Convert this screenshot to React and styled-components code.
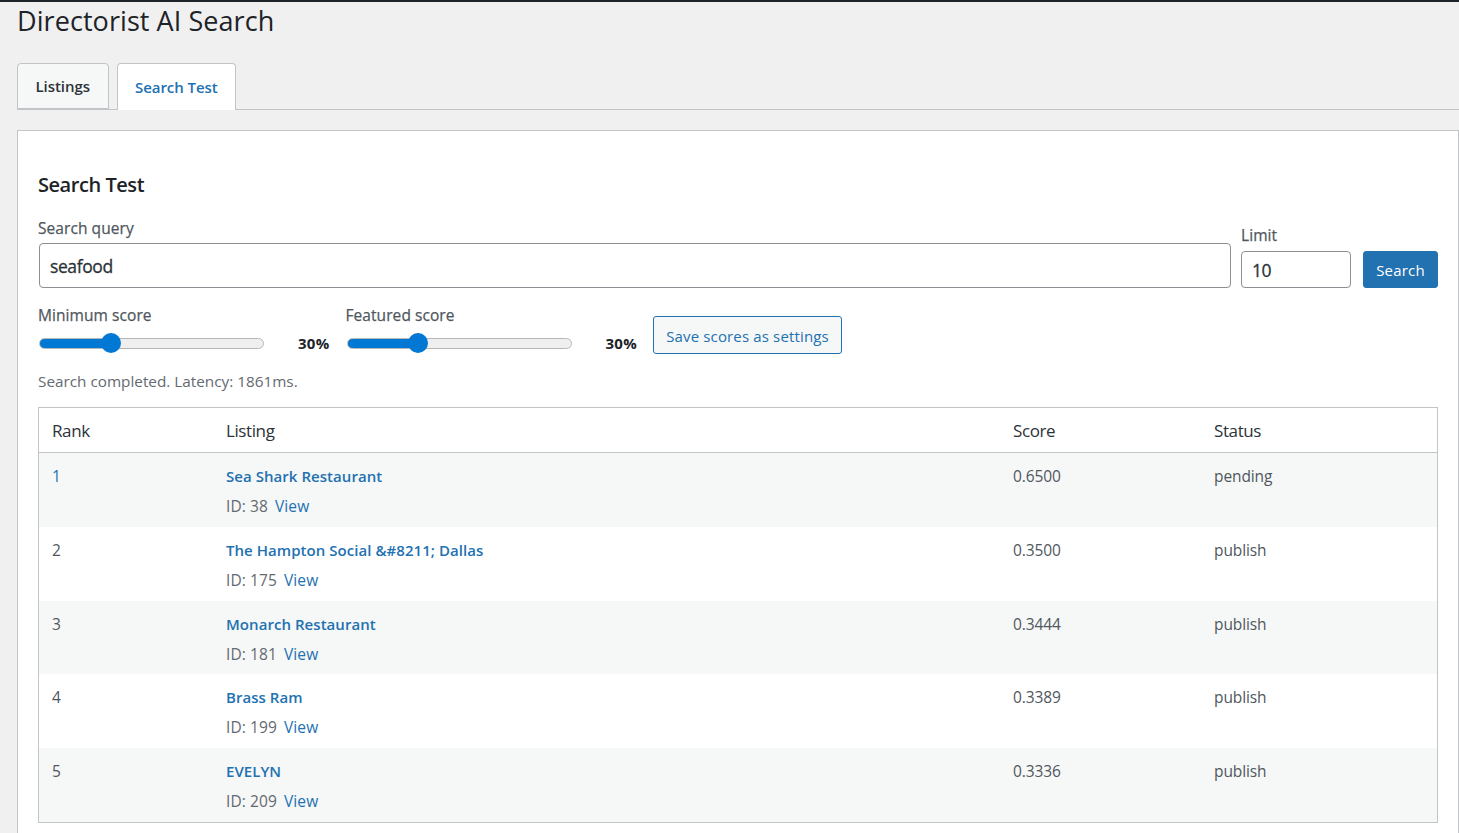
import React, { useState } from "react";
import styled, { createGlobalStyle } from "styled-components";

const GlobalStyle = createGlobalStyle`
  html, body {
    margin: 0;
    padding: 0;
    height: 833px;
    overflow: hidden;
    background: #f0f0f1;
  }
  body {
    font-family: "Open Sans", "Noto Sans", sans-serif;
    font-size: 14px;
    color: #3c434a;
    border-top: 2px solid #1d2327;
    box-sizing: border-box;
  }
`;

const rows = [
  { rank: 1, name: "Sea Shark Restaurant", id: 38, score: "0.6500", status: "pending" },
  { rank: 2, name: "The Hampton Social &#8211; Dallas", id: 175, score: "0.3500", status: "publish" },
  { rank: 3, name: "Monarch Restaurant", id: 181, score: "0.3444", status: "publish" },
  { rank: 4, name: "Brass Ram", id: 199, score: "0.3389", status: "publish" },
  { rank: 5, name: "EVELYN", id: 209, score: "0.3336", status: "publish" },
];

function ScoreSlider({ label, value }) {
  const [current, setCurrent] = useState(value);
  return (
    <SliderGroup>
      <SliderLabel>{label}</SliderLabel>
      <SliderRow>
        <Range
          type="range"
          min="0"
          max="100"
          value={current}
          $fill={10 + (current / 100) * 205}
          onChange={(e) => setCurrent(Number(e.target.value))}
        />
        <Percent>{current}%</Percent>
      </SliderRow>
    </SliderGroup>
  );
}

function App() {
  const [query, setQuery] = useState("seafood");
  const [limit, setLimit] = useState("10");

  return (
    <Page>
      <GlobalStyle />
      <Title>Directorist AI Search</Title>
      <Tabs>
        <Tab>Listings</Tab>
        <Tab $active>Search Test</Tab>
      </Tabs>
      <Panel>
        <PanelTitle>Search Test</PanelTitle>
        <SearchRow>
          <QueryField>
            <FieldLabel>Search query</FieldLabel>
            <QueryInput value={query} onChange={(e) => setQuery(e.target.value)} />
          </QueryField>
          <LimitField>
            <LimitLabel>Limit</LimitLabel>
            <LimitInput value={limit} onChange={(e) => setLimit(e.target.value)} />
          </LimitField>
          <PrimaryButton>Search</PrimaryButton>
        </SearchRow>
        <ScoreRow>
          <ScoreSlider label="Minimum score" value={30} />
          <ScoreSlider label="Featured score" value={30} />
          <SecondaryButton>Save scores as settings</SecondaryButton>
        </ScoreRow>
        <StatusLine>Search completed. Latency: 1861ms.</StatusLine>
        <Results>
          <colgroup>
            <col width="174" />
            <col width="787" />
            <col width="201" />
            <col />
          </colgroup>
          <thead>
            <tr>
              <HeadCell>Rank</HeadCell>
              <HeadCell>Listing</HeadCell>
              <HeadCell>Score</HeadCell>
              <HeadCell>Status</HeadCell>
            </tr>
          </thead>
          <tbody>
            {rows.map((row) => (
              <ResultRow key={row.id}>
                <Cell $link={row.rank === 1}>{row.rank}</Cell>
                <Cell>
                  <ListingName href="#">{row.name}</ListingName>
                  <ListingMeta>
                    ID: {row.id}
                    <ViewLink href="#">View</ViewLink>
                  </ListingMeta>
                </Cell>
                <Cell>{row.score}</Cell>
                <Cell>{row.status}</Cell>
              </ResultRow>
            ))}
          </tbody>
        </Results>
      </Panel>
    </Page>
  );
}

export default App;

const Page = styled.div`
  padding: 0 0 0 17px;
`;

const Title = styled.h1`
  margin: 0;
  height: 61px;
  font-size: 27px;
  font-weight: 400;
  line-height: 38px;
  color: #1d2327;
  letter-spacing: 0.07px;
`;

const Tabs = styled.div`
  display: flex;
  gap: 8px;
  height: 46px;
  border-bottom: 1px solid #c3c4c7;
`;

const Tab = styled.a`
  box-sizing: border-box;
  height: ${(p) => (p.$active ? "47px" : "46px")};
  padding: 0 17.5px;
  display: flex;
  align-items: center;
  font-size: 15px;
  font-weight: 600;
  letter-spacing: -0.05px;
  border: 1px solid #c3c4c7;
  border-radius: 4px 4px 0 0;
  background: ${(p) => (p.$active ? "#fff" : "#f6f7f7")};
  border-bottom: ${(p) => (p.$active ? "none" : "1px solid #c3c4c7")};
  color: ${(p) => (p.$active ? "#2271b1" : "#2c3338")};
`;

const Panel = styled.div`
  box-sizing: border-box;
  margin-top: 20px;
  height: 720px;
  padding: 0 20px;
  background: #fff;
  border: 1px solid #c3c4c7;
`;

const PanelTitle = styled.h2`
  margin: 0;
  padding-top: 40px;
  font-size: 20px;
  line-height: 28px;
  font-weight: 600;
  letter-spacing: -0.45px;
  color: #1d2327;
`;

const SearchRow = styled.div`
  display: flex;
  align-items: flex-end;
  gap: 12px;
  margin-top: 19px;
`;

const QueryField = styled.div`
  flex: 1;
  display: flex;
  flex-direction: column;
  margin-right: -1px;
`;

const LimitField = styled.div`
  width: 110px;
  display: flex;
  flex-direction: column;
`;

const FieldLabel = styled.label`
  display: block;
  font-size: 15.5px;
  line-height: 20px;
  font-weight: 500;
  letter-spacing: 0.07px;
  color: #50575e;
  -webkit-text-stroke: 0.25px #50575e;
  margin-bottom: 5px;
`;

const LimitLabel = styled(FieldLabel)`
  margin-bottom: 6px;
`;

const SliderLabel = styled(FieldLabel)`
  margin-bottom: 8px;
`;

const TextInput = styled.input`
  box-sizing: border-box;
  width: 100%;
  padding: 0 10px;
  border: 1px solid #8c8f94;
  border-radius: 4px;
  background: #fff;
  color: #2c3338;
  font-family: inherit;
  font-size: 17.5px;
  font-weight: 500;
  letter-spacing: -0.4px;
  -webkit-text-stroke: 0.3px #2c3338;
  outline: none;
`;

const QueryInput = styled(TextInput)`
  margin-left: 1px;
  height: 45px;
`;

const LimitInput = styled(TextInput)`
  height: 37px;
`;

const PrimaryButton = styled.button`
  box-sizing: border-box;
  width: 75px;
  height: 37px;
  border: 1px solid #2271b1;
  border-radius: 3px;
  background: #2271b1;
  color: #fff;
  font-family: inherit;
  font-size: 15px;
  letter-spacing: 0.2px;
`;

const ScoreRow = styled.div`
  display: flex;
  align-items: flex-start;
  gap: 16px;
  margin-top: 17px;
`;

const SliderGroup = styled.div`
  width: 291.5px;
`;

const SliderRow = styled.div`
  display: flex;
  align-items: flex-start;
  height: 20px;
`;

const Range = styled.input`
  appearance: none;
  -webkit-appearance: none;
  width: 225px;
  height: 20px;
  margin: 0 0 0 1px;
  background: transparent;
  outline: none;

  &::-webkit-slider-runnable-track {
    box-sizing: border-box;
    height: 11px;
    border-radius: 6px;
    border: 1px solid #b7b7b7;
    background: linear-gradient(
      to right,
      #0078d4 ${(p) => p.$fill}px,
      #efefef ${(p) => p.$fill}px
    );
  }

  &::-webkit-slider-thumb {
    -webkit-appearance: none;
    width: 20px;
    height: 20px;
    margin-top: -5.5px;
    border-radius: 50%;
    border: 0;
    background: #0078d4;
  }
`;

const Percent = styled.span`
  margin-left: auto;
  font-size: 15px;
  line-height: 20px;
  font-weight: 700;
  letter-spacing: 0.3px;
  color: #1d2327;
`;

const SecondaryButton = styled.button`
  box-sizing: border-box;
  width: 189px;
  height: 38px;
  margin-top: 11px;
  padding-top: 2px;
  border: 1px solid #2271b1;
  border-radius: 3px;
  background: #f6f7f7;
  color: #2271b1;
  font-family: inherit;
  font-size: 15px;
  letter-spacing: 0.15px;
`;

const StatusLine = styled.p`
  margin: 17px 0 16px;
  font-size: 15.3px;
  line-height: 20px;
  color: #646970;
`;

const Results = styled.table`
  box-sizing: border-box;
  width: 1400px;
  table-layout: fixed;
  border-collapse: separate;
  border-spacing: 0;
  border: 1px solid #c3c4c7;
`;

const HeadCell = styled.th`
  height: 44px;
  padding: 0 13px;
  text-align: left;
  font-size: 17px;
  font-weight: 400;
  letter-spacing: -0.4px;
  color: #2c3338;
  border-bottom: 1px solid #c3c4c7;
`;

const ResultRow = styled.tr`
  height: 73.8px;
  &:nth-child(odd) {
    background: #f6f7f7;
  }
`;

const Cell = styled.td`
  padding: 13px 13px 0;
  vertical-align: top;
  font-size: 15.5px;
  line-height: 20px;
  letter-spacing: -0.1px;
  color: ${(p) => (p.$link ? "#2271b1" : "#50575e")};
`;

const ListingName = styled.a`
  display: block;
  font-size: 15px;
  font-weight: 600;
  color: #2271b1;
  text-decoration: none;
  letter-spacing: 0.05px;
`;

const ListingMeta = styled.div`
  margin-top: 10px;
  color: #646970;
  letter-spacing: 0.1px;
`;

const ViewLink = styled.a`
  margin-left: 7px;
  color: #2271b1;
  text-decoration: none;
`;
